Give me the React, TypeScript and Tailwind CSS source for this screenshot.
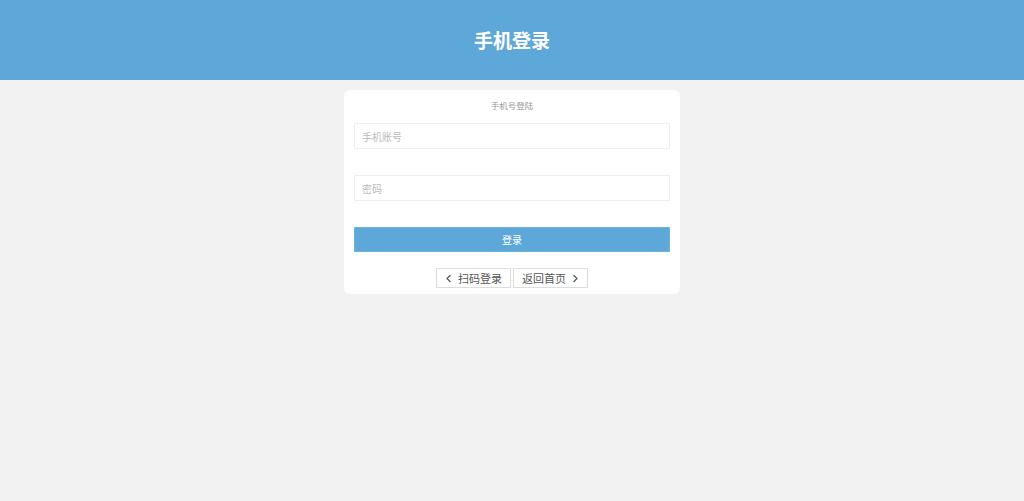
import React from "react";

export default function App() {
  return (
    <div className="min-h-[501px] w-full bg-[#f2f2f2] font-['Noto_Sans_CJK_SC',sans-serif]">
      <div className="flex h-[80px] items-center justify-center bg-[#5ea7d9]">
        <h1 className="text-[19px] font-bold text-white">手机登录</h1>
      </div>
      <div className="mx-auto mt-[10px] w-[336px] rounded-[6px] bg-white px-[10px] pb-[6px] pt-[9px]">
        <div className="h-[12px] text-center text-[8.5px] leading-[12px] text-[#999]">手机号登陆</div>
        <input
          className="mt-[12px] block h-[26px] w-full border border-[#eeeeee] px-[7px] text-[10px] text-[#333] outline-none placeholder:text-[#bbb]"
          placeholder="手机账号"
        />
        <input
          type="password"
          className="mt-[26px] block h-[26px] w-full border border-[#eeeeee] px-[7px] text-[10px] text-[#333] outline-none placeholder:text-[#bbb]"
          placeholder="密码"
        />
        <button className="mt-[26px] flex h-[25px] w-full items-center justify-center border border-[#6cb2e2] bg-[#5ea7d9] text-[10px] text-white">
          登录
        </button>
        <div className="mt-[16px] flex justify-center gap-[2px]">
          <button className="flex h-[20px] w-[75px] items-center justify-center gap-[5px] border border-[#dddddd] bg-white text-[11px] text-[#555]">
            <svg width="8" height="9" viewBox="0 0 8 9" fill="none" stroke="#555" strokeWidth="1.2">
              <path d="M5.5 1 L2 4.5 L5.5 8" />
            </svg>
            扫码登录
          </button>
          <button className="flex h-[20px] w-[75px] items-center justify-center gap-[5px] border border-[#dddddd] bg-white text-[11px] text-[#555]">
            返回首页
            <svg width="8" height="9" viewBox="0 0 8 9" fill="none" stroke="#555" strokeWidth="1.2">
              <path d="M2.5 1 L6 4.5 L2.5 8" />
            </svg>
          </button>
        </div>
      </div>
    </div>
  );
}
